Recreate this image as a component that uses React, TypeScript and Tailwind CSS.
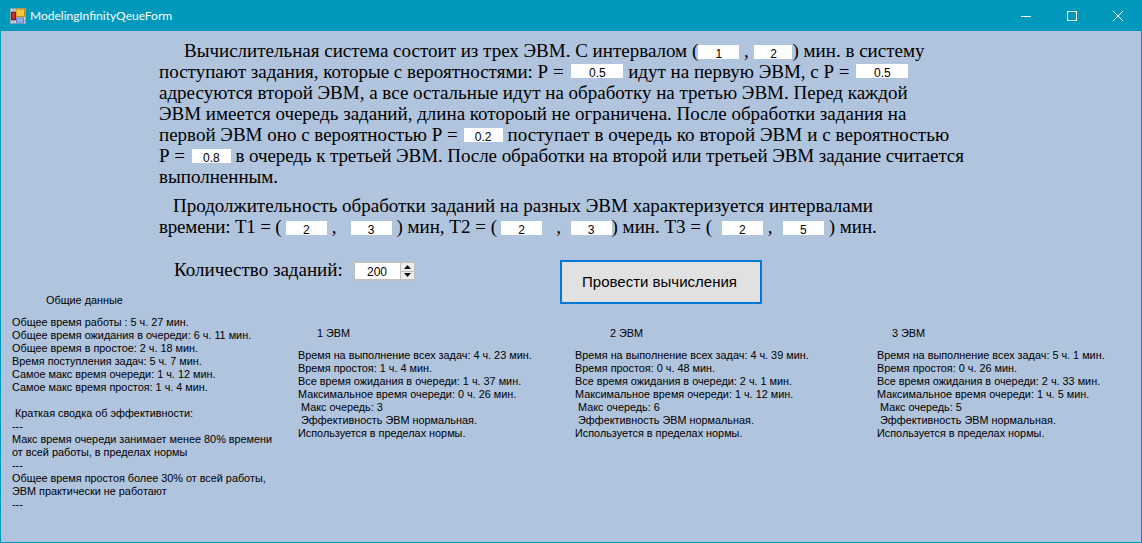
import type { ReactNode } from "react";

const Field = ({ value, className }: { value: string; className: string }) => (
  <span
    className={`inline-block h-[14px] bg-white text-center align-top font-['Liberation_Sans',sans-serif] text-[12px] leading-[18px] ${className}`}
  >
    {value}
  </span>
);

const Line = ({ children, className = "" }: { children: ReactNode; className?: string }) => (
  <div className={`h-[21px] whitespace-pre leading-[21px] ${className}`}>{children}</div>
);

const machines = [
  {
    title: "1 ЭВМ",
    titleClass: "pl-[19px]",
    width: "w-[277px]",
    lines: [
      "Время на выполнение всех задач: 4 ч. 23 мин.",
      "Время простоя: 1 ч. 4 мин.",
      "Все время ожидания в очереди: 1 ч. 37 мин.",
      "Максимальное время очереди: 0 ч. 26 мин.",
      " Макс очередь: 3",
      " Эффективность ЭВМ нормальная.",
      "Используется в пределах нормы.",
    ],
  },
  {
    title: "2 ЭВМ",
    titleClass: "pl-[35px]",
    width: "w-[302px]",
    lines: [
      "Время на выполнение всех задач: 4 ч. 39 мин.",
      "Время простоя: 0 ч. 48 мин.",
      "Все время ожидания в очереди: 2 ч. 1 мин.",
      "Максимальное время очереди: 1 ч. 12 мин.",
      " Макс очередь: 6",
      " Эффективность ЭВМ нормальная.",
      "Используется в пределах нормы.",
    ],
  },
  {
    title: "3 ЭВМ",
    titleClass: "pl-[15px]",
    width: "w-[240px]",
    lines: [
      "Время на выполнение всех задач: 5 ч. 1 мин.",
      "Время простоя: 0 ч. 26 мин.",
      "Все время ожидания в очереди: 2 ч. 33 мин.",
      "Максимальное время очереди: 1 ч. 5 мин.",
      " Макс очередь: 5",
      " Эффективность ЭВМ нормальная.",
      "Используется в пределах нормы.",
    ],
  },
];

const summary = [
  "Общее время работы : 5 ч. 27 мин.",
  "Общее время ожидания в очереди: 6 ч. 11 мин.",
  "Общее время в простое: 2 ч. 18 мин.",
  "Время поступления задач: 5 ч. 7 мин.",
  "Самое макс время очереди: 1 ч. 12 мин.",
  "Самое макс время простоя: 1 ч. 4 мин.",
  "",
  " Краткая сводка об эффективности:",
  "---",
  "Макс время очереди занимает менее 80% времени",
  "от всей работы, в пределах нормы",
  "---",
  "Общее время простоя более 30% от всей работы,",
  "ЭВМ практически не работают",
  "---",
];

const App = () => {
  return (
    <div className="flex h-[543px] w-[1142px] flex-col overflow-hidden border-x border-b border-[#0099bc] bg-[#b0c4de] text-black">
      {/* title bar */}
      <div className="flex h-[31px] shrink-0 items-center bg-[#0099bc] text-white">
        <svg width="16" height="16" viewBox="0 0 16 16" className="ml-[9px]">
          <path d="M0.5 0.5h15v15h-15zM0.5 3.5h15M0.5 12.5h15M3.5 0.5v15M12.5 0.5v15" fill="#c9d6dc" stroke="#8fa6b0" />
          <rect x="6" y="1" width="8.5" height="7.5" fill="#f2c83c" stroke="#c08a18" />
          <rect x="1.5" y="4.5" width="4" height="7" fill="#c8322e" stroke="#7a1a18" />
          <rect x="6.5" y="10" width="7" height="5" fill="#8fb0ee" stroke="#6680c8" />
        </svg>
        <span className="ml-[4px] font-['Lato',sans-serif] text-[12px]">ModelingInfinityQeueForm</span>
        <div className="ml-auto flex items-center">
          <svg width="10" height="10" viewBox="0 0 10 10" className="mr-[36px]" stroke="white" fill="none">
            <path d="M0 5.5h10" />
          </svg>
          <svg width="10" height="10" viewBox="0 0 10 10" className="mr-[36px]" stroke="white" fill="none">
            <rect x="0.5" y="0.5" width="9" height="9" />
          </svg>
          <svg width="10" height="10" viewBox="0 0 10 10" className="mr-[18px]" stroke="white" fill="none">
            <path d="M0 0l10 10M10 0L0 10" />
          </svg>
        </div>
      </div>

      {/* task text */}
      <div className="pl-[158px] pt-[9px] font-['Liberation_Serif',serif] text-[19px]">
        <Line className="pl-[25px]">
          {"Вычислительная система состоит из трех ЭВМ. С интервалом ("}
          <Field value="1" className="mt-[5px] w-[41px]" />
          {" , "}
          <Field value="2" className="ml-[1px] mt-[5px] w-[38px]" />
          {") мин. в систему"}
        </Line>
        <Line>
          {"поступают задания, которые с вероятностями: Р = "}
          <Field value="0.5" className="ml-[3px] mt-[3px] w-[52px]" />
          {" идут на первую ЭВМ, с Р = "}
          <Field value="0.5" className="ml-[2px] mt-[3px] w-[52px]" />
        </Line>
        <Line>адресуются второй ЭВМ, а все остальные идут на обработку на третью ЭВМ. Перед каждой</Line>
        <Line>ЭВМ имеется очередь заданий, длина котороый не ограничена. После обработки задания на</Line>
        <Line>
          {"первой ЭВМ оно с вероятностью Р = "}
          <Field value="0.2" className="ml-[1px] mt-[4px] w-[39px]" />
          <span className="tracking-[0.08px]">{" поступает в очередь ко второй ЭВМ и с вероятностью"}</span>
        </Line>
        <Line>
          {"Р = "}
          <Field value="0.8" className="ml-[2px] mt-[4px] w-[39px]" />
          <span className="tracking-[-0.08px]">{" в очередь к третьей ЭВМ. После обработки на второй или третьей ЭВМ задание считается"}</span>
        </Line>
        <Line>выполненным.</Line>
        <Line className="mt-[8px] pl-[14px]">Продолжительность обработки заданий на разных ЭВМ характеризуется интервалами</Line>
        <Line>
          <span className="tracking-[-0.2px]">{"времени: Т1 = ( "}</span>
          <Field value="2" className="mt-[5px] w-[41px]" />
          {" ,   "}
          <Field value="3" className="mt-[5px] w-[41px]" />
          {" ) мин, Т2 = ("}
          <Field value="2" className="ml-[4px] mt-[5px] w-[41px]" />
          {"   ,  "}
          <Field value="3" className="mt-[5px] w-[41px]" />
          {") мин. Т3 = ( "}
          <Field value="2" className="ml-[5px] mt-[5px] w-[41px]" />
          {" ,  "}
          <Field value="5" className="ml-[1px] mt-[5px] w-[41px]" />
          {" ) мин."}
        </Line>
      </div>

      {/* count + run button */}
      <div className="mt-[23px] flex h-[33px] shrink-0 items-start">
        <div className="ml-[173px] mt-[-1px] w-[179px] shrink-0 font-['Liberation_Serif',serif] text-[19px] leading-[21px]">
          Количество заданий:
        </div>
        <div className="mt-[1px] flex h-[20px] w-[63px] shrink-0 items-center border-2 border-[#c0c0c0] bg-white font-['Liberation_Sans',sans-serif] text-[12px]">
          <span className="flex-1 pr-[1px] pt-[1px] text-center">200</span>
          <div className="flex w-[14px] flex-col self-stretch border-l border-[#c0c0c0]">
            <span className="flex flex-1 items-center justify-center border-b border-[#c0c0c0] bg-[#ececec]">
              <svg width="7" height="4" viewBox="0 0 7 4">
                <path d="M3.5 0L7 4H0z" fill="#111" />
              </svg>
            </span>
            <span className="flex flex-1 items-center justify-center bg-[#ececec]">
              <svg width="7" height="4" viewBox="0 0 7 4">
                <path d="M0 0h7L3.5 4z" fill="#111" />
              </svg>
            </span>
          </div>
        </div>
        <button className="ml-[144px] h-[44px] w-[202px] shrink-0 border-2 border-[#0078d7] bg-[#e1e1e1] pr-[3px] pt-[1px] font-['Liberation_Sans',sans-serif] text-[15px]">
          Провести вычисления
        </button>
      </div>

      {/* results */}
      <div className="flex font-['Liberation_Sans',sans-serif] text-[10.85px] leading-[13px]">
        <div className="ml-[11px] w-[286px] whitespace-pre">
          <div className="pl-[34px] pt-[1px]">Общие данные</div>
          <div className="mt-[9px]">
            {summary.map((line, i) => (
              <div key={i} className="h-[13px]">
                {line}
              </div>
            ))}
          </div>
        </div>
        {machines.map((m) => (
          <div key={m.title} className={`shrink-0 whitespace-pre pt-[34px] ${m.width}`}>
            <div className={m.titleClass}>{m.title}</div>
            <div className="mt-[9px]">
              {m.lines.map((line, i) => (
                <div key={i} className="h-[13px]">
                  {line}
                </div>
              ))}
            </div>
          </div>
        ))}
      </div>
    </div>
  );
};

export default App;
